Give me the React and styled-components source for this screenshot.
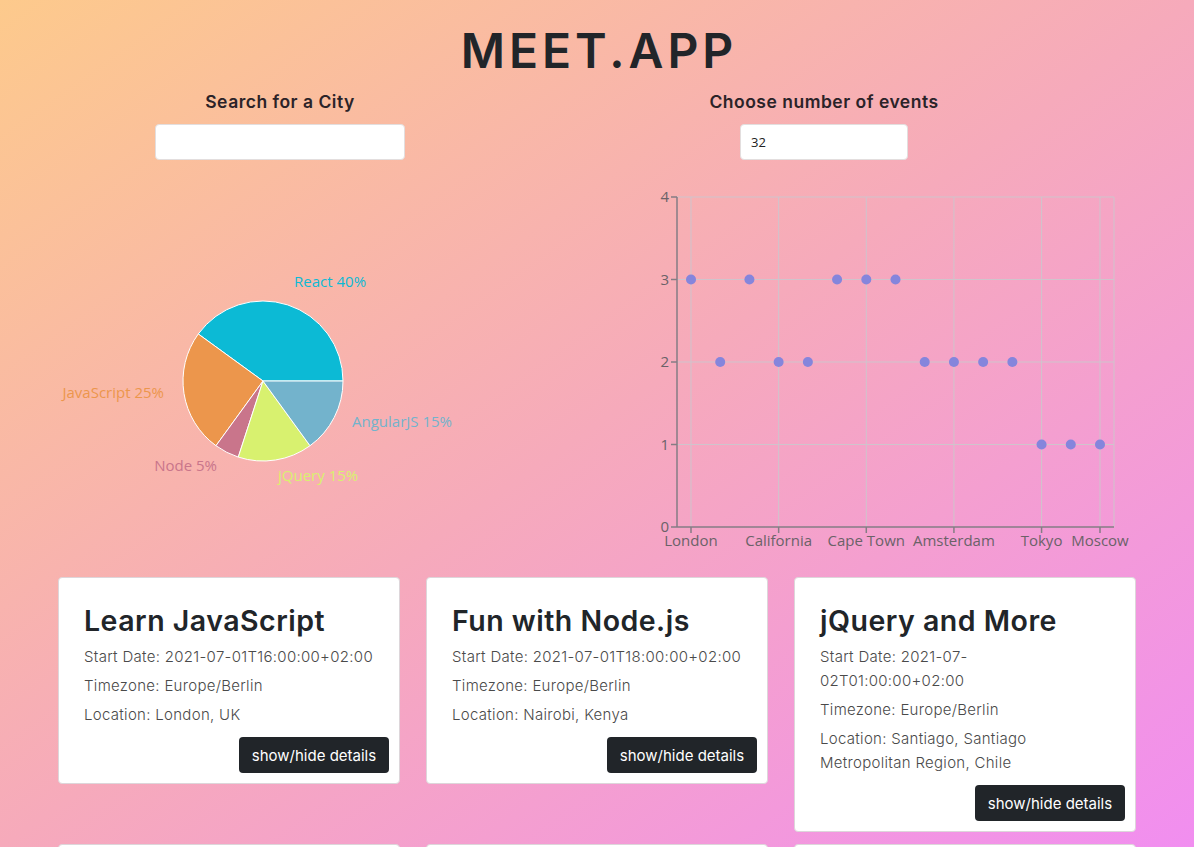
import React from "react";
import styled, { createGlobalStyle } from "styled-components";

const GlobalStyle = createGlobalStyle`
  html, body { margin: 0; padding: 0; }
  body {
    min-height: 100vh;
    background: linear-gradient(to bottom right, #fdca8c 0%, #f6aabb 50%, #f18ef0 100%);
    background-attachment: fixed;
    font-family: "Inter", "Noto Sans", sans-serif;
    color: #212529;
  }
`;

const Page = styled.div`
  display: flex;
  flex-direction: column;
  align-items: stretch;
  padding-top: 21px;
`;

const Title = styled.h1`
  margin: 0;
  text-align: center;
  font-family: "Inter", sans-serif;
  font-weight: 600;
  font-size: 48px;
  line-height: 60px;
  letter-spacing: 4px;
  padding-left: 4px;
  color: #212529;
`;

const SearchRow = styled.div`
  display: grid;
  grid-template-columns: 544px 544px;
  padding-left: 8px;
  margin-top: 9px;
`;

const Field = styled.div`
  display: flex;
  flex-direction: column;
  align-items: center;
`;

const Label = styled.label`
  font-family: "Inter", sans-serif;
  font-weight: 600;
  font-size: 17.5px;
  line-height: 24px;
  letter-spacing: 0.5px;
  color: #2b2328;
  margin-bottom: 10px;
`;

const Input = styled.input`
  box-sizing: border-box;
  width: ${(p) => p.$w}px;
  height: 36px;
  border: 1px solid #e3dede;
  border-radius: 4px;
  background: #fff;
  padding: 0 10px;
  font-family: "Open Sans", sans-serif;
  font-size: 13px;
  color: #222;
  outline: none;
`;

const ChartsRow = styled.div`
  display: flex;
  height: 400px;
  margin-top: 10px;
`;

const ChartSvg = styled.svg`
  display: block;
  flex: none;
  font-family: "Open Sans", "Noto Sans", sans-serif;
  overflow: visible;
`;

const CardGrid = styled.div`
  display: grid;
  grid-template-columns: repeat(3, 342px);
  column-gap: 26px;
  row-gap: 12px;
  justify-content: center;
  align-items: start;
  margin-top: 7px;
  padding-bottom: 30px;
`;

const Card = styled.div`
  box-sizing: border-box;
  display: flex;
  flex-direction: column;
  background: #fff;
  border: 1px solid #ddd6da;
  border-radius: 4px;
  padding: 26px 10px 10px 25px;
`;

const CardTitle = styled.h2`
  margin: 0 0 7px;
  font-family: "Inter", sans-serif;
  font-weight: 600;
  font-size: 28.5px;
  line-height: 34px;
  letter-spacing: 0.5px;
  color: #212529;
`;

const Info = styled.p`
  margin: 0 0 5px;
  padding-right: 15px;
  font-family: "Inter", sans-serif;
  font-weight: 300;
  font-size: 15px;
  line-height: 24px;
  letter-spacing: 0.3px;
  color: #4a4a4a;
`;

const DetailsButton = styled.button`
  align-self: flex-end;
  margin-top: 5px;
  height: 36px;
  width: 150px;
  border: none;
  border-radius: 4px;
  background: #212529;
  color: #fff;
  font-family: "Inter", sans-serif;
  font-weight: 400;
  font-size: 15px;
  cursor: pointer;
`;

const pieData = [
  { name: "React", value: 40, color: "#0cbad5" },
  { name: "JavaScript", value: 25, color: "#ec964c" },
  { name: "Node", value: 5, color: "#c9758b" },
  { name: "jQuery", value: 15, color: "#d8f16f" },
  { name: "AngularJS", value: 15, color: "#73b3cc" },
];

const pieLabels = [
  { x: 294, y: 117, anchor: "start" },
  { x: 164, y: 228, anchor: "end" },
  { x: 217, y: 301, anchor: "end" },
  { x: 278, y: 311, anchor: "start" },
  { x: 352, y: 257, anchor: "start" },
];

function PieChart() {
  const cx = 263;
  const cy = 211;
  const r = 80;
  let start = 0;
  const slices = pieData.map((d, i) => {
    const sweep = (d.value / 100) * 360;
    const a0 = (start * Math.PI) / 180;
    const a1 = ((start + sweep) * Math.PI) / 180;
    start += sweep;
    const x0 = cx + r * Math.cos(a0);
    const y0 = cy - r * Math.sin(a0);
    const x1 = cx + r * Math.cos(a1);
    const y1 = cy - r * Math.sin(a1);
    const large = sweep > 180 ? 1 : 0;
    const path = `M${cx},${cy} L${x0},${y0} A${r},${r} 0 ${large} 0 ${x1},${y1} Z`;
    return <path key={i} d={path} fill={d.color} stroke="#fff" strokeWidth="1" />;
  });
  return (
    <ChartSvg width="552" height="400">
      {slices}
      {pieData.map((d, i) => (
        <text
          key={d.name}
          x={pieLabels[i].x}
          y={pieLabels[i].y}
          textAnchor={pieLabels[i].anchor}
          fill={d.color}
          fontSize="15"
        >
          {d.name} {d.value}%
        </text>
      ))}
    </ChartSvg>
  );
}

const cities = [
  "London", "", "", "California", "", "", "Cape Town", "", "", "Amsterdam", "", "", "Tokyo", "", "Moscow",
];
const counts = [3, 2, 3, 2, 2, 3, 3, 3, 2, 2, 2, 2, 1, 1, 1];

function ScatterChart() {
  const left = 125;
  const right = 562;
  const top = 27;
  const bottom = 357;
  const x0 = 139;
  const step = (548 - 139) / 14;
  const yOf = (v) => bottom - (v * (bottom - top)) / 4;
  const xOf = (i) => x0 + i * step;
  const tickIdx = [0, 3, 6, 9, 12, 14];
  return (
    <ChartSvg width="642" height="400">
      {[1, 2, 3, 4].map((v) => (
        <line key={"h" + v} x1={left} x2={right} y1={yOf(v)} y2={yOf(v)} stroke="#cfc4cc" strokeWidth="1" />
      ))}
      {tickIdx.map((i) => (
        <line key={"v" + i} x1={xOf(i)} x2={xOf(i)} y1={top} y2={bottom} stroke="#cfc4cc" strokeWidth="1" />
      ))}
      <line x1={right} x2={right} y1={top} y2={bottom} stroke="#cfc4cc" strokeWidth="1" />
      <line x1={left} x2={left} y1={top} y2={bottom} stroke="#857d84" strokeWidth="1.5" />
      <line x1={left} x2={right} y1={bottom} y2={bottom} stroke="#857d84" strokeWidth="1.5" />
      {[0, 1, 2, 3, 4].map((v) => (
        <g key={"yt" + v}>
          <line x1={left - 6} x2={left} y1={yOf(v)} y2={yOf(v)} stroke="#857d84" strokeWidth="1.5" />
          <text x={left - 8} y={yOf(v) + 5} textAnchor="end" fill="#6b6268" fontSize="15">
            {v}
          </text>
        </g>
      ))}
      {tickIdx.map((i) => (
        <g key={"xt" + i}>
          <line x1={xOf(i)} x2={xOf(i)} y1={bottom} y2={bottom + 6} stroke="#857d84" strokeWidth="1.5" />
          <text x={xOf(i)} y={bottom + 19} textAnchor="middle" fill="#6b6268" fontSize="15">
            {cities[i]}
          </text>
        </g>
      ))}
      {counts.map((c, i) => (
        <circle key={"d" + i} cx={xOf(i)} cy={yOf(c)} r="5" fill="#8585dc" />
      ))}
    </ChartSvg>
  );
}

const events = [
  { title: "Learn JavaScript", start: "2021-07-01T16:00:00+02:00", tz: "Europe/Berlin", loc: "London, UK" },
  { title: "Fun with Node.js", start: "2021-07-01T18:00:00+02:00", tz: "Europe/Berlin", loc: "Nairobi, Kenya" },
  { title: "jQuery and More", start: "2021-07-02T01:00:00+02:00", tz: "Europe/Berlin", loc: "Santiago, Santiago Metropolitan Region, Chile" },
  { title: "React is Fun", start: "2021-07-02T09:00:00+02:00", tz: "Europe/Berlin", loc: "Berlin, Germany" },
  { title: "AngularJS Our Friend", start: "2021-07-02T12:00:00+02:00", tz: "Europe/Berlin", loc: "Toronto, Canada" },
  { title: "Node Meetup", start: "2021-07-03T10:00:00+02:00", tz: "Europe/Berlin", loc: "Tokyo, Japan" },
];

export default function App() {
  return (
    <>
      <GlobalStyle />
      <Page>
        <Title>MEET.APP</Title>
        <SearchRow>
          <Field>
            <Label>Search for a City</Label>
            <Input $w={250} type="text" defaultValue="" />
          </Field>
          <Field>
            <Label>Choose number of events</Label>
            <Input $w={168} type="text" defaultValue="32" />
          </Field>
        </SearchRow>
        <ChartsRow>
          <PieChart />
          <ScatterChart />
        </ChartsRow>
        <CardGrid>
          {events.map((e) => (
            <Card key={e.title}>
              <CardTitle>{e.title}</CardTitle>
              <Info>Start Date: {e.start}</Info>
              <Info>Timezone: {e.tz}</Info>
              <Info>Location: {e.loc}</Info>
              <DetailsButton>show/hide details</DetailsButton>
            </Card>
          ))}
        </CardGrid>
      </Page>
    </>
  );
}
